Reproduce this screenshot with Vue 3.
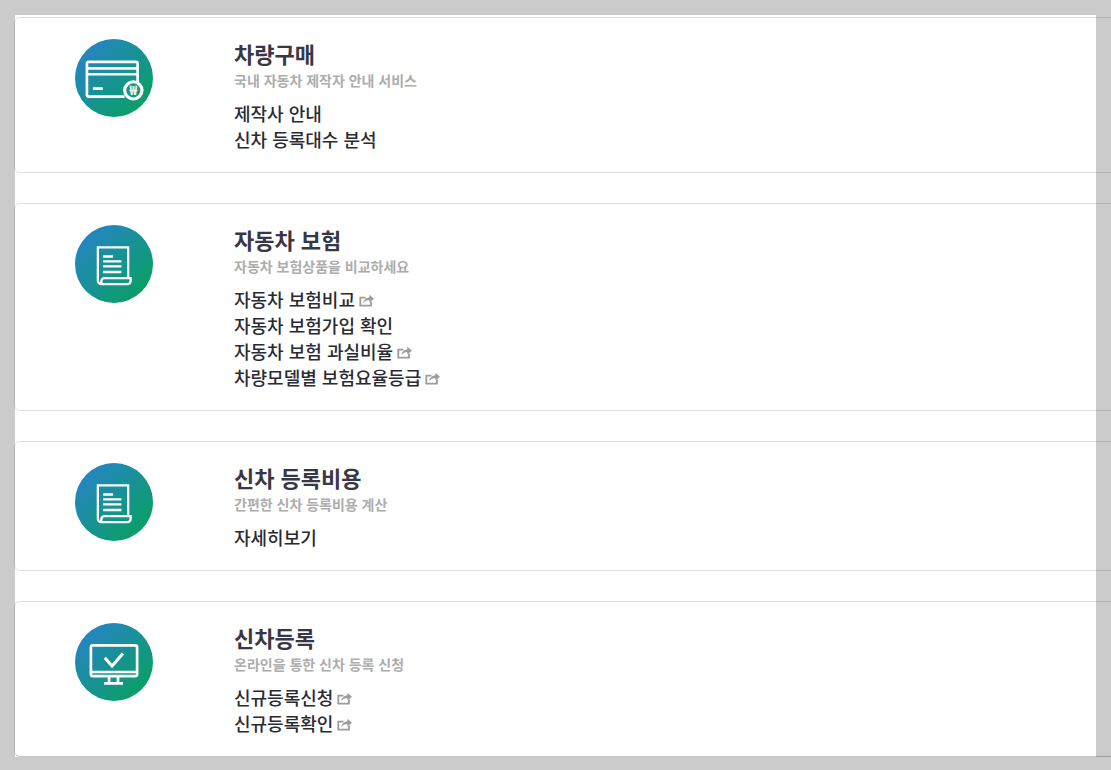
<template>
  <main class="page">
    <div class="sheet">
      <section v-for="card in cards" :key="card.title" class="card">
        <div class="badge">
          <svg v-if="card.icon === 'wallet'" viewBox="0 0 79 79" class="badge-icon">
            <path d="M14 23H61a2 2 0 0 1 2 2V44M50 58H14a2 2 0 0 1-2-2V25a2 2 0 0 1 2-2" />
            <path d="M12 29.500H63M12 35.500H63M18 50H28" />
            <circle cx="58.700" cy="51.700" r="8.700" class="coin" />
            <text x="58.700" y="56.300" text-anchor="middle" class="won">₩</text>
          </svg>
          <svg v-else-if="card.icon === 'doc'" viewBox="0 0 79 79" class="badge-icon thin">
            <path d="M23 56V22.500H53.500V53" />
            <path d="M26.500 59.500a3.500 3.500 0 0 1-3.500-3.500M26.500 59.500H52.500a3.500 3.500 0 0 0 3.500-3V53.500H30a3 3 0 0 0-3.500 3V59.500" />
            <path d="M28.300 31.700H38.300M28.300 36.700H46.700M28.300 41.700H46.700M28.300 47.300H46.700" />
          </svg>
          <svg v-else viewBox="0 0 79 79" class="badge-icon">
            <path d="M18 22.500H60.500a2 2 0 0 1 2 2V51.500a2 2 0 0 1-2 2H18a2 2 0 0 1-2-2V24.500a2 2 0 0 1 2-2Z" />
            <path d="M16 49.300H62.500M34.300 53.500V60M43.300 53.500V60M29.300 60.700H48.300" />
            <path d="M30 35L37.300 43.300L48.300 30.700" class="tick" />
          </svg>
        </div>
        <div class="body">
          <h2>{{ card.title }}</h2>
          <p class="sub">{{ card.sub }}</p>
          <ul class="links">
            <li v-for="link in card.links" :key="link.text">
              {{ link.text }}
              <svg v-if="link.ext" viewBox="0 0 15 14" class="ext">
                <path d="M12 8.500V12.700H1.300V4.700H6.500" class="ext-box" />
                <path d="M4.300 10C4.800 6.700 7.500 4.600 10.300 4.600V1.800L15 5.700L10.300 9.400V7C8 7 6 7.900 4.300 10Z" class="ext-arrow" />
              </svg>
            </li>
          </ul>
        </div>
      </section>
    </div>
  </main>
</template>

<script setup>
const cards = [
  {
    title: "차량구매",
    sub: "국내 자동차 제작자 안내 서비스",
    icon: "wallet",
    links: [{ text: "제작사 안내" }, { text: "신차 등록대수 분석" }],
  },
  {
    title: "자동차 보험",
    sub: "자동차 보험상품을 비교하세요",
    icon: "doc",
    links: [
      { text: "자동차 보험비교", ext: true },
      { text: "자동차 보험가입 확인" },
      { text: "자동차 보험 과실비율", ext: true },
      { text: "차량모델별 보험요율등급", ext: true },
    ],
  },
  {
    title: "신차 등록비용",
    sub: "간편한 신차 등록비용 계산",
    icon: "doc",
    links: [{ text: "자세히보기" }],
  },
  {
    title: "신차등록",
    sub: "온라인을 통한 신차 등록 신청",
    icon: "screen",
    links: [
      { text: "신규등록신청", ext: true },
      { text: "신규등록확인", ext: true },
    ],
  },
];
</script>

<style scoped>
.page {
  height: 770px;
  overflow: hidden;
  background: #cbcbcb;
  padding-top: 15px;
  box-sizing: border-box;
  font-family: "Noto Sans CJK KR", "Noto Sans", sans-serif;
}

.sheet {
  width: 1081px;
  margin-left: 15px;
  background: #fff;
  display: flex;
  flex-direction: column;
  gap: 30px;
  padding-top: 2px;
}

.card {
  width: 1120px;
  margin-left: -1px;
  box-sizing: border-box;
  display: flex;
  border: 1px solid rgba(0, 0, 0, 0.12);
  border-radius: 6px 0 0 6px;
  padding: 20.500px 0 20px 59.500px;
}

.card:last-child {
  border-bottom-color: rgba(0, 0, 0, 0.22);
}

.badge {
  width: 78.500px;
  height: 78.500px;
  flex: none;
  border-radius: 50%;
  background: linear-gradient(135deg, #2485c0 14%, #0a9f66 86%);
}

.badge-icon {
  display: block;
  width: 78.500px;
  height: 78.500px;
  fill: none;
  stroke: #fff;
  stroke-width: 2.700;
}

.badge-icon.thin {
  stroke-width: 2.300;
}

.tick {
  stroke-width: 3;
}

.coin {
  fill: #139a7d;
  stroke-width: 3.200;
}

.won {
  fill: #fff;
  stroke: none;
  font-size: 13px;
  font-weight: 700;
}

.body {
  margin-left: 81px;
  padding-top: 0.500px;
}

h2 {
  margin: -1px 0 0;
  font-size: 22px;
  line-height: 30px;
  font-weight: 700;
  color: #383746;
  word-spacing: 1px;
}

.sub {
  margin: 4px 0 0;
  font-size: 14px;
  line-height: 16px;
  font-weight: 700;
  color: #adadad;
  word-spacing: 0.700px;
}

.links {
  list-style: none;
  margin: 12px 0 0;
  padding: 0;
}

.links li {
  display: flex;
  align-items: center;
  gap: 4px;
  height: 26px;
  font-size: 18px;
  font-weight: 500;
  color: #2a2a32;
  word-spacing: 1px;
}

.ext {
  width: 15px;
  height: 14px;
  margin-top: 1px;
}

.ext-box {
  fill: none;
  stroke: #9c9c9c;
  stroke-width: 1.800;
}

.ext-arrow {
  fill: #9c9c9c;
}
</style>

<style>
body {
  margin: 0;
  overflow: hidden;
}
</style>
